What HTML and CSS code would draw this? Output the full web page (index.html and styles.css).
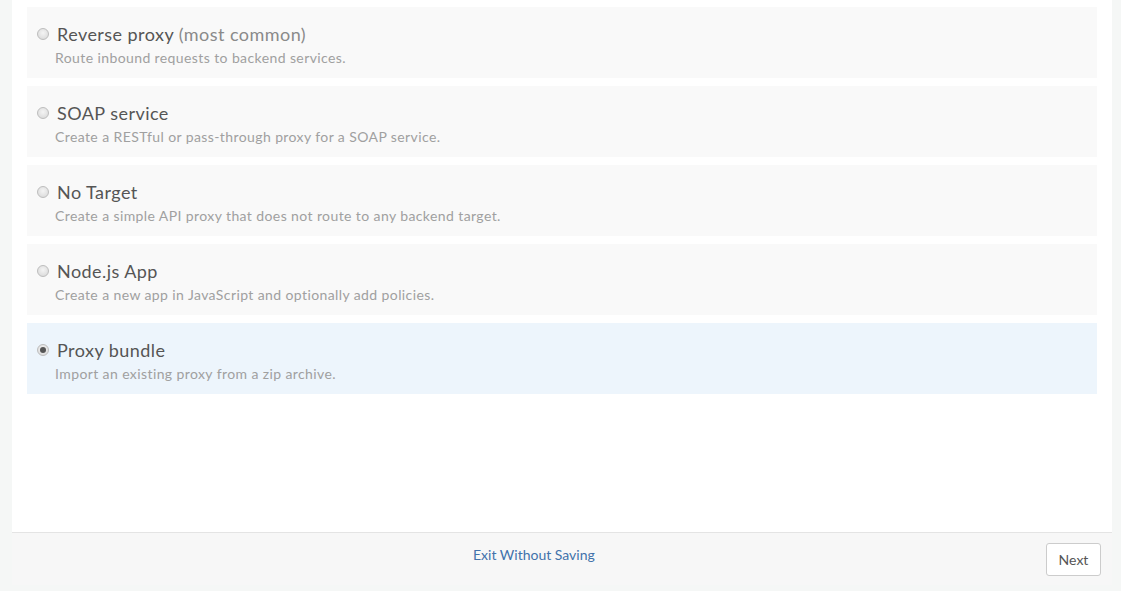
FILE: index.html
```html
<!DOCTYPE html>
<html>
<head>
<meta charset="utf-8">
<link rel="stylesheet" href="styles.css">
</head>
<body>
<div class="panel">
  <div class="options">
    <label class="card">
      <div class="title-row"><span class="radio"></span><span class="title">Reverse proxy <span class="hint">(most common)</span></span></div>
      <div class="desc">Route inbound requests to backend services.</div>
    </label>
    <label class="card">
      <div class="title-row"><span class="radio"></span><span class="title">SOAP service</span></div>
      <div class="desc">Create a RESTful or pass-through proxy for a SOAP service.</div>
    </label>
    <label class="card">
      <div class="title-row"><span class="radio"></span><span class="title">No Target</span></div>
      <div class="desc">Create a simple API proxy that does not route to any backend target.</div>
    </label>
    <label class="card">
      <div class="title-row"><span class="radio"></span><span class="title">Node.js App</span></div>
      <div class="desc">Create a new app in JavaScript and optionally add policies.</div>
    </label>
    <label class="card selected">
      <div class="title-row"><span class="radio checked"></span><span class="title">Proxy bundle</span></div>
      <div class="desc">Import an existing proxy from a zip archive.</div>
    </label>
  </div>
  <div class="footer">
    <a class="exit" href="#">Exit Without Saving</a>
    <button class="next">Next</button>
  </div>
</div>
</body>
</html>
```

FILE: styles.css
```css
html, body {
  margin: 0;
  padding: 0;
  background: #f5f7f6;
  font-family: Lato, "Open Sans", Arial, sans-serif;
}
.panel {
  margin: 0 12px;
  width: 1100px;
  background: #fff;
}
.options {
  height: 532px;
  padding-top: 7px;
  box-sizing: border-box;
  display: flex;
  flex-direction: column;
  gap: 8px;
}
.card {
  display: block;
  margin: 0 15px;
  height: 71px;
  box-sizing: border-box;
  padding: 15px 10px 0 10px;
  background: #f9f9f9;
}
.card.selected {
  background: #edf5fc;
}
.title-row {
  display: flex;
  align-items: center;
  gap: 8px;
  height: 24px;
}
.radio {
  width: 12px;
  height: 12px;
  box-sizing: border-box;
  border-radius: 50%;
  border: 1px solid #bdbdbd;
  background: radial-gradient(circle at 50% 40%, #f4f4f4, #d6d6d6);
  position: relative;
  flex: none;
}
.radio.checked::after {
  content: "";
  position: absolute;
  left: 2px;
  top: 2px;
  width: 6px;
  height: 6px;
  border-radius: 50%;
  background: #555;
}
.title {
  font-size: 18px;
  line-height: 24px;
  color: #555;
  letter-spacing: 0.45px;
}
.hint {
  color: #8a8a8a;
}
.desc {
  margin-top: 3px;
  padding-left: 18px;
  font-size: 14px;
  line-height: 18px;
  color: #a0a0a0;
  letter-spacing: 0.4px;
}
.footer {
  border-top: 1px solid #e4e4e4;
  background: #f7f7f7;
  height: 53px;
  display: flex;
  align-items: flex-start;
  padding: 10px 11px 0 461px;
  box-sizing: border-box;
}
.exit {
  margin-top: 2px;
  font-size: 14px;
  line-height: 20px;
  color: #4272ab;
  text-decoration: none;
}
.next {
  margin-left: auto;
  width: 55px;
  height: 33px;
  background: #fff;
  border: 1px solid #ccc;
  border-radius: 3px;
  font-family: Lato, "Open Sans", Arial, sans-serif;
  font-size: 14px;
  color: #555;
  padding: 0;
}
```
